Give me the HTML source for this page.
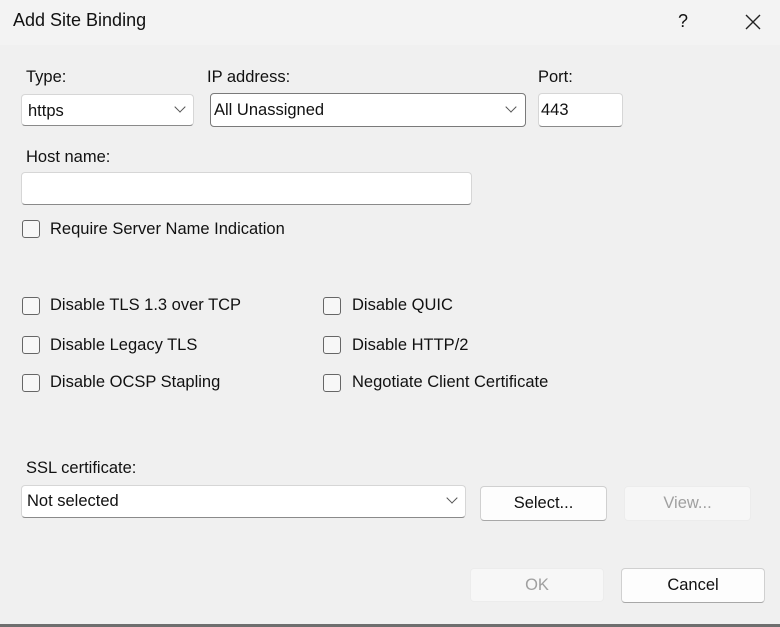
<!DOCTYPE html>
<html><head><meta charset="utf-8"><style>
*{box-sizing:border-box;margin:0;padding:0}
body{width:780px;height:627px;background:#f0f0f0;font-family:"Liberation Sans",sans-serif;color:#111;position:relative;overflow:hidden;font-size:16.5px}
.a{position:absolute;white-space:nowrap}
.title{left:0;top:0;width:780px;height:45px;background:#f3f3f3}
.box{position:absolute;background:#fff;border:1px solid #d6d6d6;border-bottom-color:#8a8a8a;border-radius:4px}
.cb{position:absolute;width:18px;height:18px;border:1px solid #666;border-radius:3px;background:#f7f7f7}
.btn{position:absolute;background:#fdfdfd;border:1px solid #d0d0d0;border-bottom-color:#a8a8a8;border-radius:4px;text-align:center;font-size:16.5px}
.dis{background:#f7f7f7;border:1px solid #ececec;color:#a0a0a0}
.chev{position:absolute;width:8px;height:8px;border-right:1.3px solid #555;border-bottom:1.3px solid #555;transform:rotate(45deg)}
</style></head><body>
<div class="a title"></div>
<div class="a" style="left:13px;top:10px;font-size:18px">Add Site Binding</div>
<div class="a" style="left:678px;top:11px;font-size:18px">?</div>
<svg class="a" style="left:745px;top:14px" width="16" height="16"><path d="M1 1L15 15M15 1L1 15" stroke="#222" stroke-width="1.4"/></svg>

<div class="a" style="left:26px;top:68px">Type:</div>
<div class="a" style="left:207px;top:68px">IP address:</div>
<div class="a" style="left:538px;top:68px">Port:</div>

<div class="box" style="left:21px;top:94px;width:173px;height:32px"></div>
<div class="a" style="left:28px;top:102px">https</div>
<div class="chev" style="left:176px;top:103px"></div>

<div class="box" style="left:210px;top:93px;width:316px;height:34px;border-color:#7a7a7a"></div>
<div class="a" style="left:214px;top:101px">All Unassigned</div>
<div class="chev" style="left:507px;top:103px"></div>

<div class="box" style="left:538px;top:93px;width:85px;height:34px"></div>
<div class="a" style="left:541px;top:101px">443</div>

<div class="a" style="left:26px;top:148px">Host name:</div>
<div class="box" style="left:21px;top:172px;width:451px;height:33px"></div>

<div class="cb" style="left:22px;top:220px"></div>
<div class="a" style="left:50px;top:220px">Require Server Name Indication</div>

<div class="cb" style="left:22px;top:297px"></div>
<div class="a" style="left:50px;top:296px">Disable TLS 1.3 over TCP</div>
<div class="cb" style="left:22px;top:336px"></div>
<div class="a" style="left:50px;top:336px">Disable Legacy TLS</div>
<div class="cb" style="left:22px;top:374px"></div>
<div class="a" style="left:50px;top:373px">Disable OCSP Stapling</div>

<div class="cb" style="left:323px;top:297px"></div>
<div class="a" style="left:352px;top:296px">Disable QUIC</div>
<div class="cb" style="left:323px;top:336px"></div>
<div class="a" style="left:352px;top:336px">Disable HTTP/2</div>
<div class="cb" style="left:323px;top:374px"></div>
<div class="a" style="left:352px;top:373px">Negotiate Client Certificate</div>

<div class="a" style="left:26px;top:459px">SSL certificate:</div>
<div class="box" style="left:21px;top:485px;width:445px;height:33px"></div>
<div class="a" style="left:27px;top:492px">Not selected</div>
<div class="chev" style="left:448px;top:494px"></div>

<div class="btn" style="left:480px;top:486px;width:127px;height:35px;line-height:33px">Select...</div>
<div class="btn dis" style="left:624px;top:486px;width:127px;height:35px;line-height:33px">View...</div>
<div class="btn dis" style="left:470px;top:568px;width:134px;height:34px;line-height:32px">OK</div>
<div class="btn" style="left:621px;top:568px;width:144px;height:35px;line-height:33px">Cancel</div>
<div class="a" style="left:0;top:624px;width:780px;height:3px;background:#6e6e6e"></div>
</body></html>
